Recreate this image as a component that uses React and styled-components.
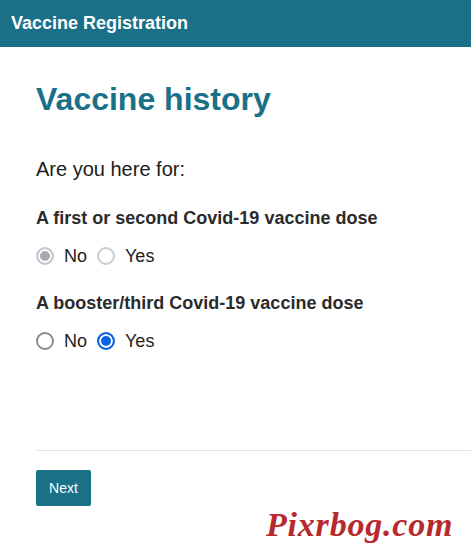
import React from "react";
import styled, { createGlobalStyle } from "styled-components";

const Global = createGlobalStyle`
  html, body { margin: 0; padding: 0; background: #fff; }
  body { font-family: "Liberation Sans", Arial, sans-serif; color: #212121; }
`;

const Page = styled.div`
  position: relative;
  width: 471px;
  height: 557px;
  overflow: hidden;
  background: #fff;
`;

const Header = styled.header`
  height: 47px;
  background: #1a7087;
  display: flex;
  align-items: center;
  padding: 0 11px;
  box-sizing: border-box;
`;

const Brand = styled.div`
  color: #fff;
  font-weight: 700;
  font-size: 18px;
  line-height: 22px;
  margin-top: -2px;
`;

const Main = styled.main`
  padding: 33px 0 0 36px;
  display: flex;
  flex-direction: column;
`;

const Title = styled.h1`
  margin: 0;
  font-size: 32px;
  line-height: 38px;
  font-weight: 700;
  color: #1a7087;
`;

const Lead = styled.p`
  margin: 39px 0 0;
  font-size: 20px;
  line-height: 24px;
  color: #1c1c1c;
`;

const Question = styled.div`
  margin-top: ${(p) => p.$top}px;
  font-size: 18px;
  line-height: 22px;
  font-weight: 700;
  color: #2b2b2b;
`;

const Options = styled.div`
  display: flex;
  align-items: center;
  gap: 10px;
  height: 24px;
  margin-top: 15px;
`;

const Option = styled.label`
  display: flex;
  align-items: center;
  gap: 10px;
  font-size: 18px;
  line-height: 24px;
  color: #222;
`;

const Radio = styled.input.attrs({ type: "radio" })`
  appearance: none;
  -webkit-appearance: none;
  box-sizing: border-box;
  width: 18px;
  height: 18px;
  margin: 0;
  border-radius: 50%;
  border: 2px solid #8b8b96;
  background: #fff;

  &:checked {
    border-color: #0b63e5;
    background: #0b63e5;
    box-shadow: inset 0 0 0 2px #fff;
  }

  &:disabled {
    border-color: #cbcbd0;
  }

  &:disabled:checked {
    border-color: #c6c6cc;
    background: #a9a9b2;
    box-shadow: inset 0 0 0 2px #fff;
  }
`;

const Divider = styled.hr`
  margin: 97px 0 0;
  border: 0;
  border-top: 1px solid #e2e2e2;
  height: 0;
`;

const NextButton = styled.button`
  align-self: flex-start;
  margin-top: 19px;
  width: 55px;
  height: 36px;
  background: #1a7087;
  color: #fff;
  border: 0;
  border-radius: 2px;
  font-family: "Liberation Sans", Arial, sans-serif;
  font-size: 14px;
  padding: 0;
  cursor: pointer;
`;

const Watermark = styled.div`
  position: absolute;
  left: 266px;
  top: 505px;
  font-family: "Liberation Serif", "Times New Roman", serif;
  font-style: italic;
  font-weight: 700;
  font-size: 34px;
  line-height: 40px;
  color: #b8292e;
  letter-spacing: 0.8px;
  pointer-events: none;
`;

function RadioGroup({ name, value, disabled }) {
  return (
    <Options>
      <Option>
        <Radio name={name} defaultChecked={value === "no"} disabled={disabled} />
        No
      </Option>
      <Option>
        <Radio name={name} defaultChecked={value === "yes"} disabled={disabled} />
        Yes
      </Option>
    </Options>
  );
}

export default function App() {
  return (
    <Page>
      <Global />
      <Header>
        <Brand>Vaccine Registration</Brand>
      </Header>
      <Main>
        <Title>Vaccine history</Title>
        <Lead>Are you here for:</Lead>
        <Question $top={26}>A first or second Covid-19 vaccine dose</Question>
        <RadioGroup name="first" value="no" disabled />
        <Question $top={24}>A booster/third Covid-19 vaccine dose</Question>
        <RadioGroup name="booster" value="yes" />
        <Divider />
        <NextButton>Next</NextButton>
      </Main>
      <Watermark>Pixrbog.com</Watermark>
    </Page>
  );
}
